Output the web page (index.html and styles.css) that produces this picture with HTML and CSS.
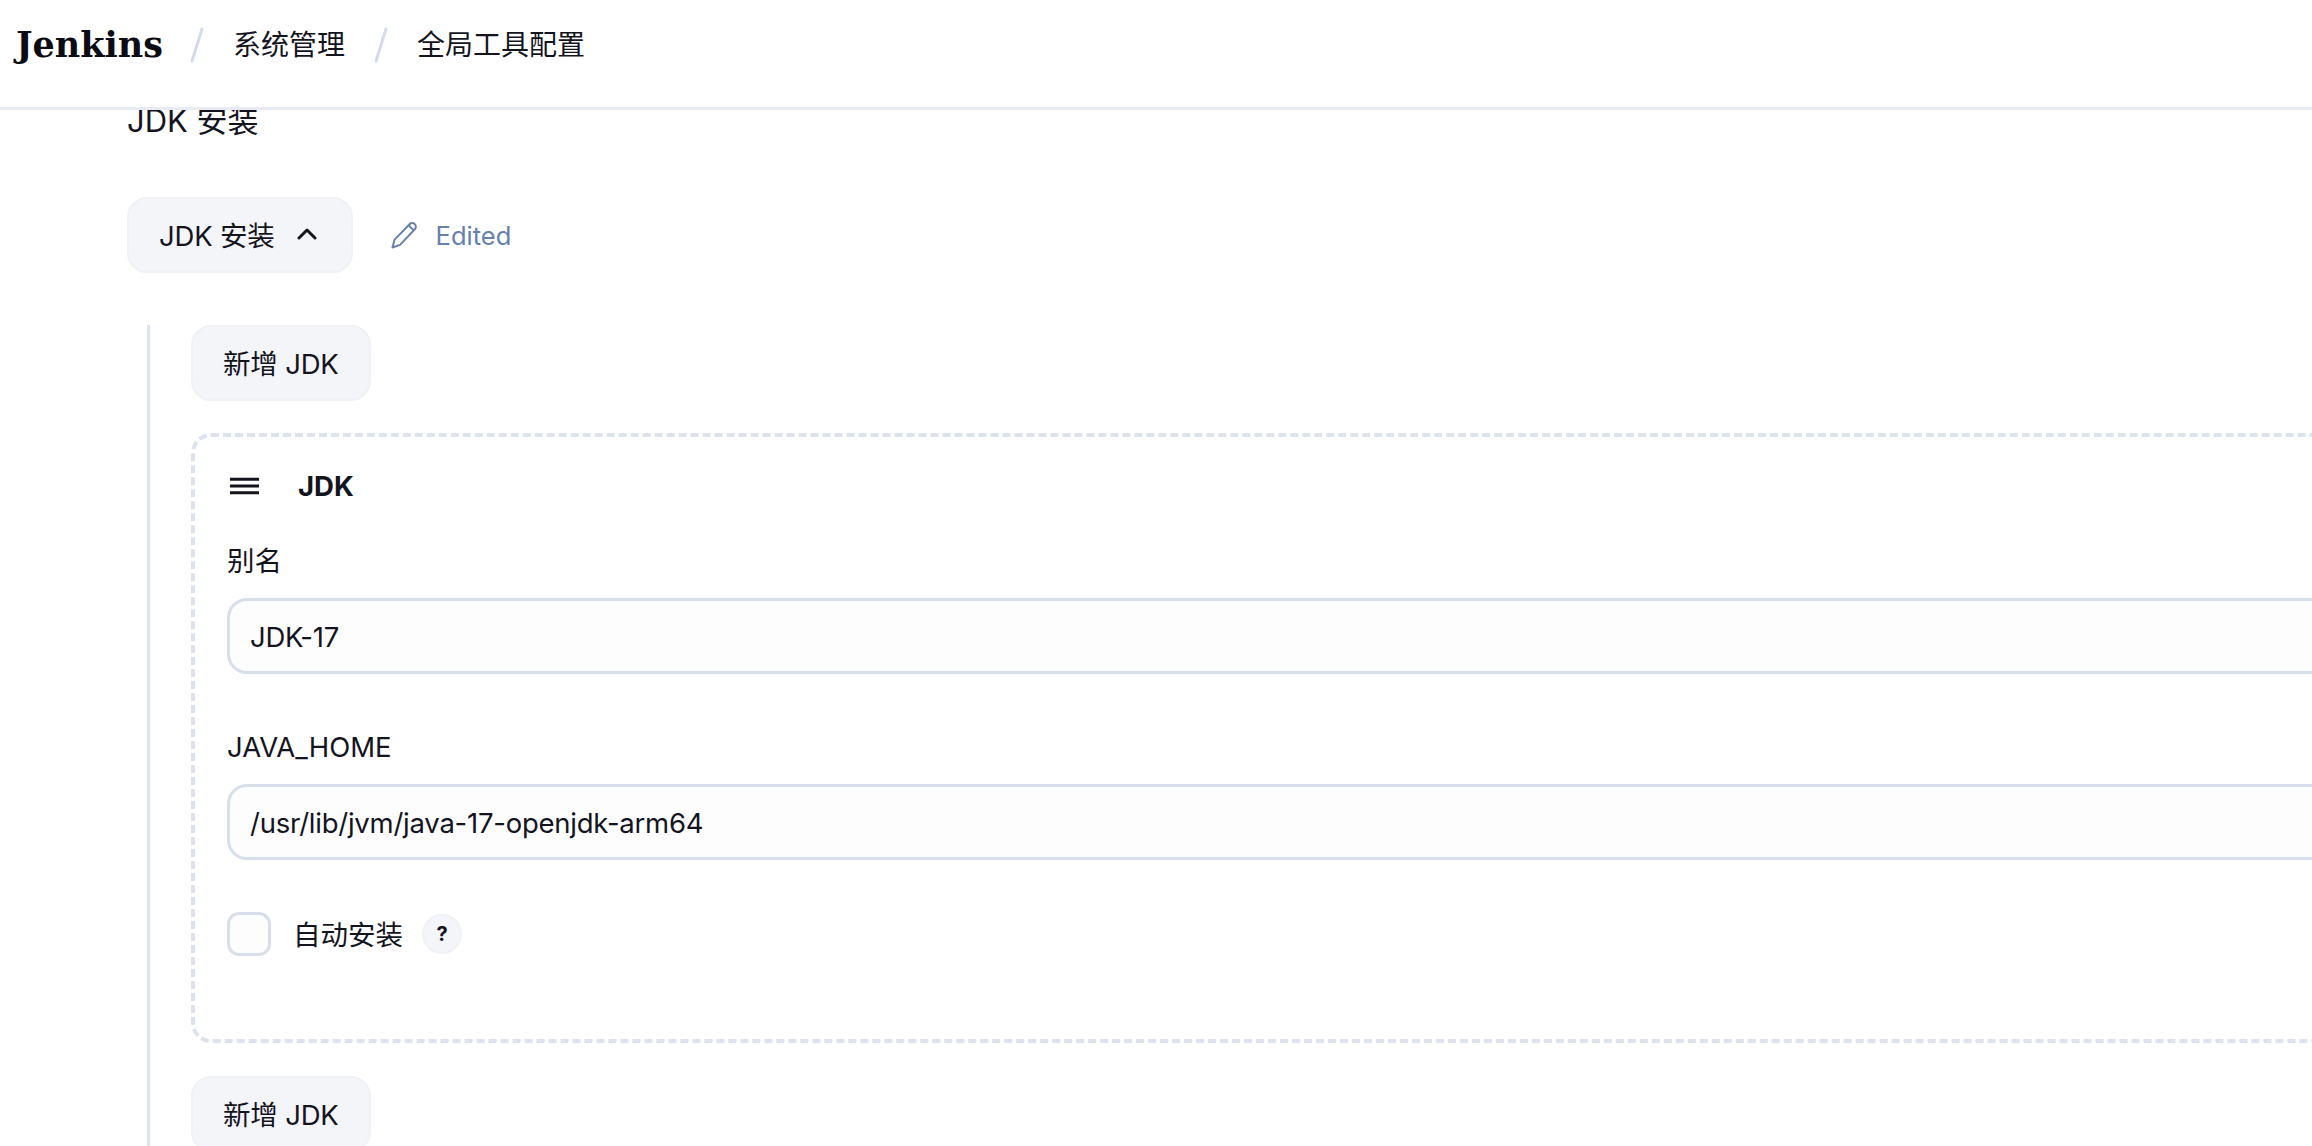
FILE: index.html
```html
<!DOCTYPE html>
<html lang="zh-CN">
<head>
    <meta charset="utf-8">
    <title>全局工具配置 - Jenkins</title>
    <link rel="stylesheet" href="styles.css">
</head>
<body>
    <header class="top-bar">
        <a class="logo">Jenkins</a>
        <svg class="crumb-sep" viewBox="0 0 14 36"><path d="M2 34 12 2"/></svg>
        <a class="crumb">系统管理</a>
        <svg class="crumb-sep" viewBox="0 0 14 36"><path d="M2 34 12 2"/></svg>
        <a class="crumb">全局工具配置</a>
    </header>

    <main class="content">
        <h2 class="section-title">JDK 安装</h2>

        <div class="toggle-row">
            <button class="btn" type="button">JDK 安装
                <svg class="chevron" viewBox="0 0 20 13"><path d="M2 11 10 3l8 8"/></svg>
            </button>
            <span class="edited">
                <svg class="pencil" viewBox="0 0 27 28">
                    <path d="M1.5 26.5 3.6 18.6 18.6 3.2a3.6 3.6 0 0 1 5.2 5.1L9 23.9Z"/>
                    <path d="M17.6 4.3 22.8 9.4"/>
                </svg>
                Edited
            </span>
        </div>

        <div class="repeat-rail">
            <button class="btn" type="button">新增 JDK</button>

            <div class="repeat-item">
                <div class="item-head">
                    <svg class="drag" viewBox="0 0 32 18"><path d="M1 2h30M1 9h30M1 16h30"/></svg>
                    <span class="item-title">JDK</span>
                </div>

                <label class="field-label" for="jdk_name">别名</label>
                <input class="field-input" type="text" id="jdk_name" value="JDK-17">

                <label class="field-label" for="jdk_home">JAVA_HOME</label>
                <input class="field-input" type="text" id="jdk_home" value="/usr/lib/jvm/java-17-openjdk-arm64">

                <div class="check-row">
                    <input class="check-box" type="checkbox" id="jdk_auto">
                    <label class="check-label" for="jdk_auto">自动安装</label>
                    <span class="help">?</span>
                </div>
            </div>

            <button class="btn btn-last" type="button">新增 JDK</button>
        </div>
    </main>
</body>
</html>
```

FILE: styles.css
```css
html, body {
    height: 100%;
}
body {
    margin: 0;
    overflow: hidden;
    background-color: white;
    color: #14141f;
    font-family: Inter, "Noto Sans CJK SC", sans-serif;
    font-size: 27.5px;
}

.top-bar {
    position: fixed;
    top: 0;
    left: 0;
    right: 0;
    z-index: 2;
    height: 110px;
    padding: 0 0 18px 15px;
    box-sizing: border-box;
    display: flex;
    align-items: center;
    gap: 29px;
    background-color: white;
    border-bottom: 3px solid #e9ebf2;
}
.logo {
    margin-left: 1px;
    margin-right: -2px;
    font-family: "DejaVu Serif", serif;
    font-weight: bold;
    font-size: 35px;
    color: #0b0b14;
}
.crumb {
    font-size: 28px;
    line-height: 38px;
}
.crumb-sep {
    width: 14px;
    height: 36px;
    fill: none;
    stroke: #d3dbe8;
    stroke-width: 3;
    stroke-linecap: round;
}

.content {
    width: 2500px;
    padding: 102px 0 0 127px;
}
.section-title {
    margin: 0 0 57px;
    font-size: 31px;
    font-weight: normal;
    line-height: 38px;
}

.toggle-row {
    display: flex;
    align-items: center;
    gap: 38px;
    margin-bottom: 52px;
}
.btn {
    display: flex;
    align-items: center;
    gap: 22px;
    height: 76px;
    padding: 0 30px 3px;
    box-sizing: border-box;
    border: 2px solid #f0f1f6;
    border-radius: 20px;
    background-color: #f4f5f9;
    color: #14141f;
    font: inherit;
    letter-spacing: -0.2px;
}
.chevron {
    width: 20px;
    height: 13px;
    margin-right: 4px;
    fill: none;
    stroke: #14141f;
    stroke-width: 3;
    stroke-linecap: round;
    stroke-linejoin: round;
}
.edited {
    display: flex;
    align-items: center;
    gap: 18px;
    color: #6681ad;
    font-size: 25.5px;
}
.pencil {
    width: 27px;
    height: 28px;
    fill: none;
    stroke: #6681ad;
    stroke-width: 2;
    stroke-linejoin: round;
}

.repeat-rail {
    margin-left: 20px;
    padding-left: 41px;
    border-left: 3px solid #dde3ee;
}
.repeat-item {
    margin-top: 32px;
    padding: 29px 32px 83px;
    border: 4px dashed #dde3ee;
    border-radius: 20px;
}
.item-head {
    display: flex;
    align-items: center;
    gap: 38px;
    height: 40px;
    padding-left: 2px;
}
.drag {
    width: 31px;
    height: 18px;
    fill: none;
    stroke: #14141f;
    stroke-width: 3;
}
.item-title {
    font-weight: bold;
}
.field-label {
    display: block;
    margin-top: 36px;
    margin-bottom: 18px;
    line-height: 38px;
}
.field-input {
    display: block;
    width: 100%;
    height: 76px;
    padding: 2px 20px 0;
    box-sizing: border-box;
    border: 3px solid #d8dfeb;
    border-radius: 20px;
    background-color: #fdfdfe;
    color: #14141f;
    font: inherit;
    letter-spacing: -0.24px;
    margin-bottom: 54px;
}
.field-label + .field-input + .field-label {
    margin-top: 0;
}
.check-row {
    display: flex;
    align-items: center;
    margin-top: -2px;
}
.check-box {
    appearance: none;
    width: 44px;
    height: 44px;
    margin: 0 22px 0 0;
    box-sizing: border-box;
    border: 3px solid #d8dfeb;
    border-radius: 12px;
    background-color: #fdfdfe;
}
.check-label {
    padding-bottom: 2px;
}
.help {
    width: 40px;
    height: 40px;
    margin-left: 19px;
    box-sizing: border-box;
    display: flex;
    align-items: center;
    justify-content: center;
    border: 2px solid #f0f1f6;
    border-radius: 50%;
    background-color: #f4f5f9;
    font-size: 20px;
    font-weight: bold;
}
.btn-last {
    margin-top: 33px;
}
```
